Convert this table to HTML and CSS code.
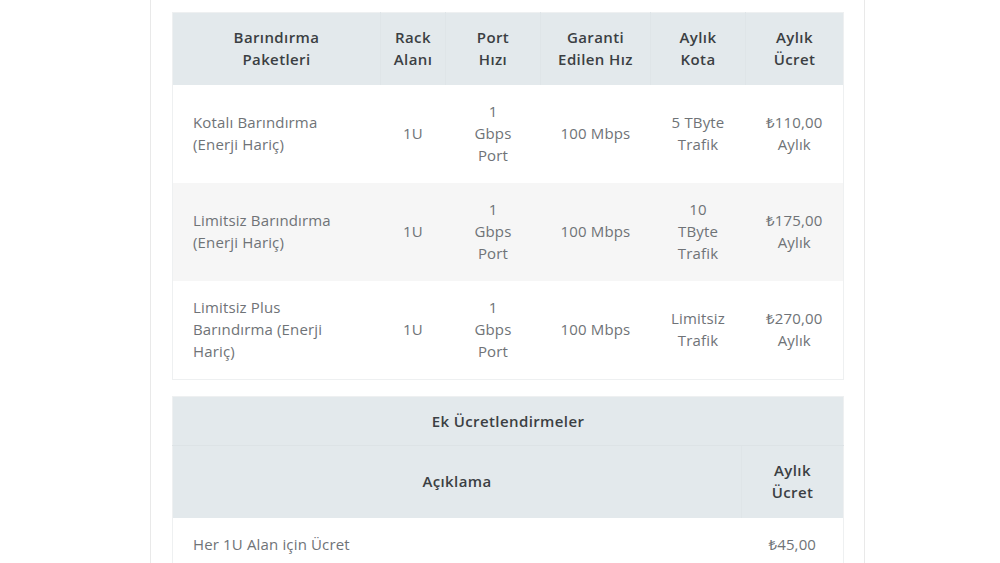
FILE: index.html
```html
<!DOCTYPE html>
<html lang="tr">
<head>
<meta charset="utf-8">
<title>Barındırma Paketleri</title>
<link rel="stylesheet" href="styles.css">
</head>
<body>
<div class="card">
  <table class="tbl tbl-main">
    <colgroup>
      <col class="c-name"><col class="c-rack"><col class="c-port"><col class="c-speed"><col class="c-quota"><col class="c-price">
    </colgroup>
    <thead>
      <tr>
        <th>Barındırma<br>Paketleri</th>
        <th>Rack<br>Alanı</th>
        <th>Port<br>Hızı</th>
        <th>Garanti<br>Edilen Hız</th>
        <th>Aylık<br>Kota</th>
        <th>Aylık<br>Ücret</th>
      </tr>
    </thead>
    <tbody>
      <tr>
        <td class="left">Kotalı Barındırma<br>(Enerji Hariç)</td>
        <td>1U</td>
        <td>1<br>Gbps<br>Port</td>
        <td>100 Mbps</td>
        <td>5 TByte<br>Trafik</td>
        <td>₺110,00<br>Aylık</td>
      </tr>
      <tr class="alt">
        <td class="left">Limitsiz Barındırma<br>(Enerji Hariç)</td>
        <td>1U</td>
        <td>1<br>Gbps<br>Port</td>
        <td>100 Mbps</td>
        <td>10<br>TByte<br>Trafik</td>
        <td>₺175,00<br>Aylık</td>
      </tr>
      <tr>
        <td class="left">Limitsiz Plus<br>Barındırma (Enerji<br>Hariç)</td>
        <td>1U</td>
        <td>1<br>Gbps<br>Port</td>
        <td>100 Mbps</td>
        <td>Limitsiz<br>Trafik</td>
        <td>₺270,00<br>Aylık</td>
      </tr>
    </tbody>
  </table>

  <table class="tbl tbl-extra">
    <colgroup>
      <col class="c-desc"><col class="c-price2">
    </colgroup>
    <thead>
      <tr><th colspan="2" class="title">Ek Ücretlendirmeler</th></tr>
      <tr>
        <th>Açıklama</th>
        <th>Aylık<br>Ücret</th>
      </tr>
    </thead>
    <tbody>
      <tr>
        <td class="left">Her 1U Alan için Ücret</td>
        <td>₺45,00</td>
      </tr>
    </tbody>
  </table>
</div>
</body>
</html>
```
FILE: styles.css
```css
html, body {
  margin: 0;
  padding: 0;
  background: #ffffff;
}

body {
  font-family: "Open Sans", "Noto Sans", "DejaVu Sans", sans-serif;
  font-size: 15px;
  letter-spacing: 0.15px;
  line-height: 22px;
  color: #6f7377;
}

.card {
  box-sizing: border-box;
  width: 715px;
  min-height: 563px;
  margin-left: 150px;
  padding: 12px 20px 0 21px;
  border-left: 1px solid #e9e9e9;
  border-right: 1px solid #e9e9e9;
  background: #ffffff;
}

.tbl {
  width: 671px;
  border-collapse: collapse;
  table-layout: fixed;
  border: 1px solid #eef0f1;
}

.tbl-extra {
  margin-top: 16px;
}

.c-name { width: 208px; }
.c-rack { width: 65px; }
.c-port { width: 95px; }
.c-speed { width: 110px; }
.c-quota { width: 95px; }
.c-price { width: 98px; }

.c-desc { width: 569px; }
.c-price2 { width: 102px; }

.tbl th {
  background: #e3e9ec;
  color: #3b3f43;
  font-weight: 600;
  letter-spacing: 0.4px;
  text-align: center;
  padding: 13px 4px 15px;
  border-left: 1px solid #dfe5e8;
  vertical-align: middle;
}

.tbl th:first-child {
  border-left: none;
}

.tbl th.title {
  padding: 13px 8px;
  border-bottom: 1px solid #dde3e6;
}

.tbl td {
  text-align: center;
  padding: 15px 4px 17px;
  vertical-align: middle;
}

.tbl td.left {
  text-align: left;
  padding-left: 20px;
}

.tbl tr.alt td {
  background: #f6f6f6;
}
```
